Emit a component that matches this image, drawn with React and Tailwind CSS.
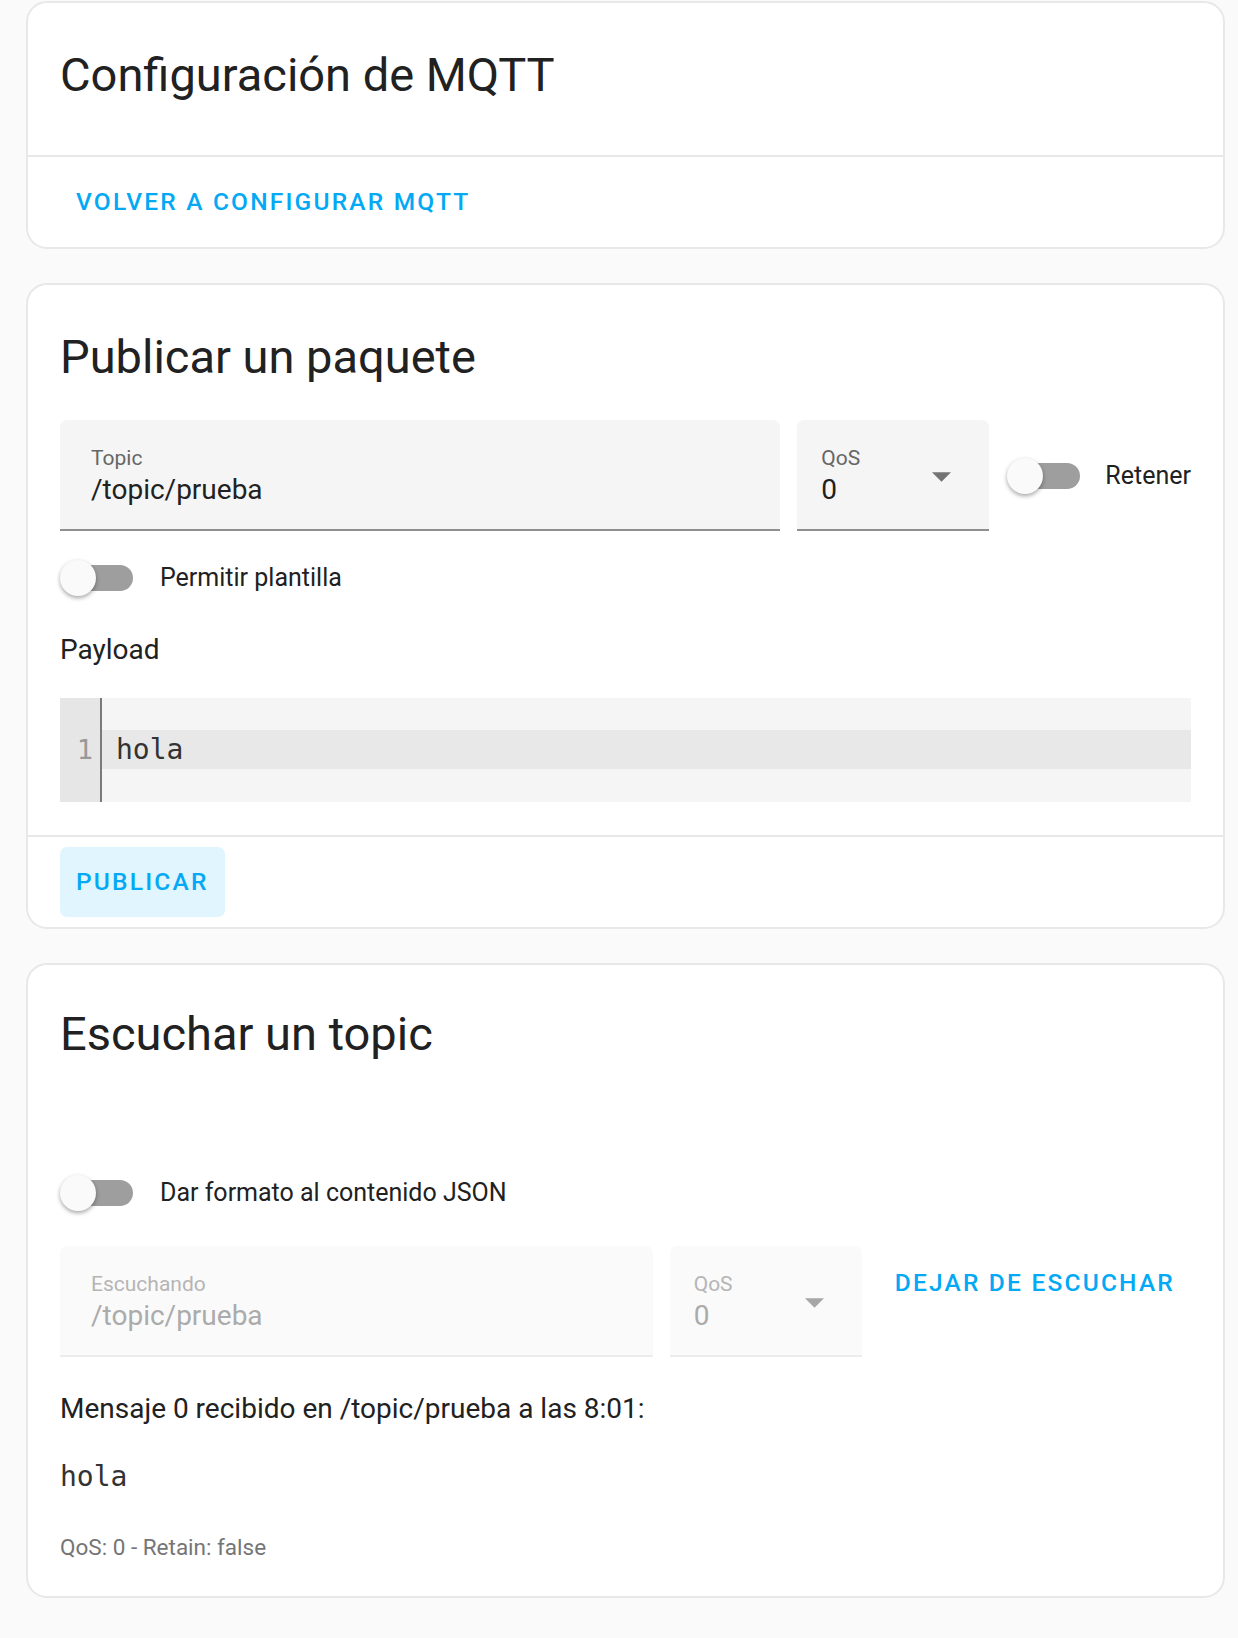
import React from 'react';

function Toggle() {
  return (
    <div className="relative h-[38px] w-[73px] shrink-0">
      <div className="absolute right-0 top-[6px] h-[26px] w-[63px] rounded-full bg-[#9e9e9e]" />
      <div className="absolute left-0 top-px h-[36px] w-[36px] rounded-full bg-[#fafafa] shadow-[0_2px_4px_rgba(0,0,0,0.35)]" />
    </div>
  );
}

function ToggleRow({ label }) {
  return (
    <div className="flex items-center gap-[27px]">
      <Toggle />
      <span className="text-[25px] leading-[32px] text-[#212121]">{label}</span>
    </div>
  );
}

function Arrow({ color }) {
  return (
    <svg width="19" height="10" viewBox="0 0 10 5" className="shrink-0">
      <path d="M0 0l5 5 5-5z" fill={color} />
    </svg>
  );
}

function TextField({ label, value, disabled, className }) {
  return (
    <div
      className={`h-[111px] rounded-t-[7px] border-b-2 pl-[31px] pt-[26px] ${
        disabled ? 'bg-[#fafafa] border-[#ececec]' : 'bg-[#f5f5f5] border-[#8f8f8f]'
      } ${className}`}
    >
      <div className={`text-[21px] leading-[24px] ${disabled ? 'text-[#b5b5b5]' : 'text-[#666666]'}`}>{label}</div>
      <div className={`mt-[2px] text-[28px] leading-[36px] ${disabled ? 'text-[#ababab]' : 'text-[#212121]'}`}>{value}</div>
    </div>
  );
}

function SelectField({ label, value, disabled }) {
  return (
    <div
      className={`flex h-[111px] w-[192px] shrink-0 items-center rounded-t-[7px] border-b-2 pl-[24px] pr-[38px] ${
        disabled ? 'bg-[#fafafa] border-[#ececec]' : 'bg-[#f5f5f5] border-[#8f8f8f]'
      }`}
    >
      <div className="flex-1 pt-[4px]">
        <div className={`text-[21px] leading-[24px] ${disabled ? 'text-[#b5b5b5]' : 'text-[#666666]'}`}>{label}</div>
        <div className={`mt-[2px] text-[28px] leading-[36px] ${disabled ? 'text-[#ababab]' : 'text-[#212121]'}`}>{value}</div>
      </div>
      <div className="pt-[4px]">
        <Arrow color={disabled ? '#a6a6a6' : '#737373'} />
      </div>
    </div>
  );
}

function TextButton({ children, filled }) {
  return (
    <button
      className={`h-[70px] rounded-[7px] px-[16px] text-[24.5px] font-medium tracking-[0.09em] text-[#03a9f4] ${
        filled ? 'bg-[#e1f5fe]' : ''
      }`}
    >
      {children}
    </button>
  );
}

function Title({ children }) {
  return <h1 className="text-[47px] font-normal leading-[56px] text-[#212121]">{children}</h1>;
}

const card = 'w-[1199px] rounded-[21px] border-2 border-[#e8e8e8] bg-white';

export default function App() {
  return (
    <div className="min-h-screen bg-[#fafafa] pb-[40px] pl-[26px] pt-px font-['Roboto','Liberation_Sans',sans-serif]">
      {/* Configuración */}
      <section className={card}>
        <div className="px-[32px] pb-[52px] pt-[44px]">
          <Title>Configuración de MQTT</Title>
        </div>
        <div className="border-t-2 border-[#e8e8e8] px-[32px] py-[10px]">
          <TextButton>VOLVER A CONFIGURAR MQTT</TextButton>
        </div>
      </section>

      {/* Publicar */}
      <section className={`${card} mt-[34px]`}>
        <div className="px-[32px] pb-[33px] pt-[44px]">
          <Title>Publicar un paquete</Title>
          <div className="mt-[35px] flex items-center gap-[17px]">
            <TextField label="Topic" value="/topic/prueba" className="flex-1" />
            <SelectField label="QoS" value="0" />
            <div className="ml-px flex items-center gap-[25px]">
              <Toggle />
              <span className="text-[25px] leading-[32px] text-[#212121]">Retener</span>
            </div>
          </div>
          <div className="mt-[28px]">
            <ToggleRow label="Permitir plantilla" />
          </div>
          <div className="mt-[33px] text-[28px] leading-[40px] text-[#212121]">Payload</div>
          <div className="mt-[28px] flex h-[104px] bg-[#f5f5f5] font-['DejaVu_Sans_Mono',monospace]">
            <div className="w-[42px] border-r-2 border-[#7a7a7a] bg-[#e6e6e6] pr-[7px] pt-[32px] text-right text-[27px] leading-[39px] text-[#999999]">
              1
            </div>
            <div className="flex-1 pt-[32px]">
              <div className="bg-[#e8e8e8] pl-[14px] text-[28px] leading-[39px] text-[#333333]">hola</div>
            </div>
          </div>
        </div>
        <div className="border-t-2 border-[#e8e8e8] px-[32px] py-[10px]">
          <TextButton filled>PUBLICAR</TextButton>
        </div>
      </section>

      {/* Escuchar */}
      <section className={`${card} mt-[34px]`}>
        <div className="px-[32px] pb-[34px] pt-[41px]">
          <Title>Escuchar un topic</Title>
          <div className="mt-[112px]">
            <ToggleRow label="Dar formato al contenido JSON" />
          </div>
          <div className="mt-[34px] flex items-start gap-[17px]">
            <TextField label="Escuchando" value="/topic/prueba" disabled className="flex-1" />
            <SelectField label="QoS" value="0" disabled />
            <div className="mt-[2px]">
              <TextButton>DEJAR DE ESCUCHAR</TextButton>
            </div>
          </div>
          <p className="mt-[32px] text-[28px] leading-[40px] text-[#212121]">
            Mensaje 0 recibido en /topic/prueba a las 8:01:
          </p>
          <pre className="mt-[28px] font-['DejaVu_Sans_Mono',monospace] text-[28px] leading-[40px] text-[#333333]">hola</pre>
          <p className="mt-[35px] text-[22.5px] leading-[30px] text-[#757575]">QoS: 0 - Retain: false</p>
        </div>
      </section>
    </div>
  );
}
